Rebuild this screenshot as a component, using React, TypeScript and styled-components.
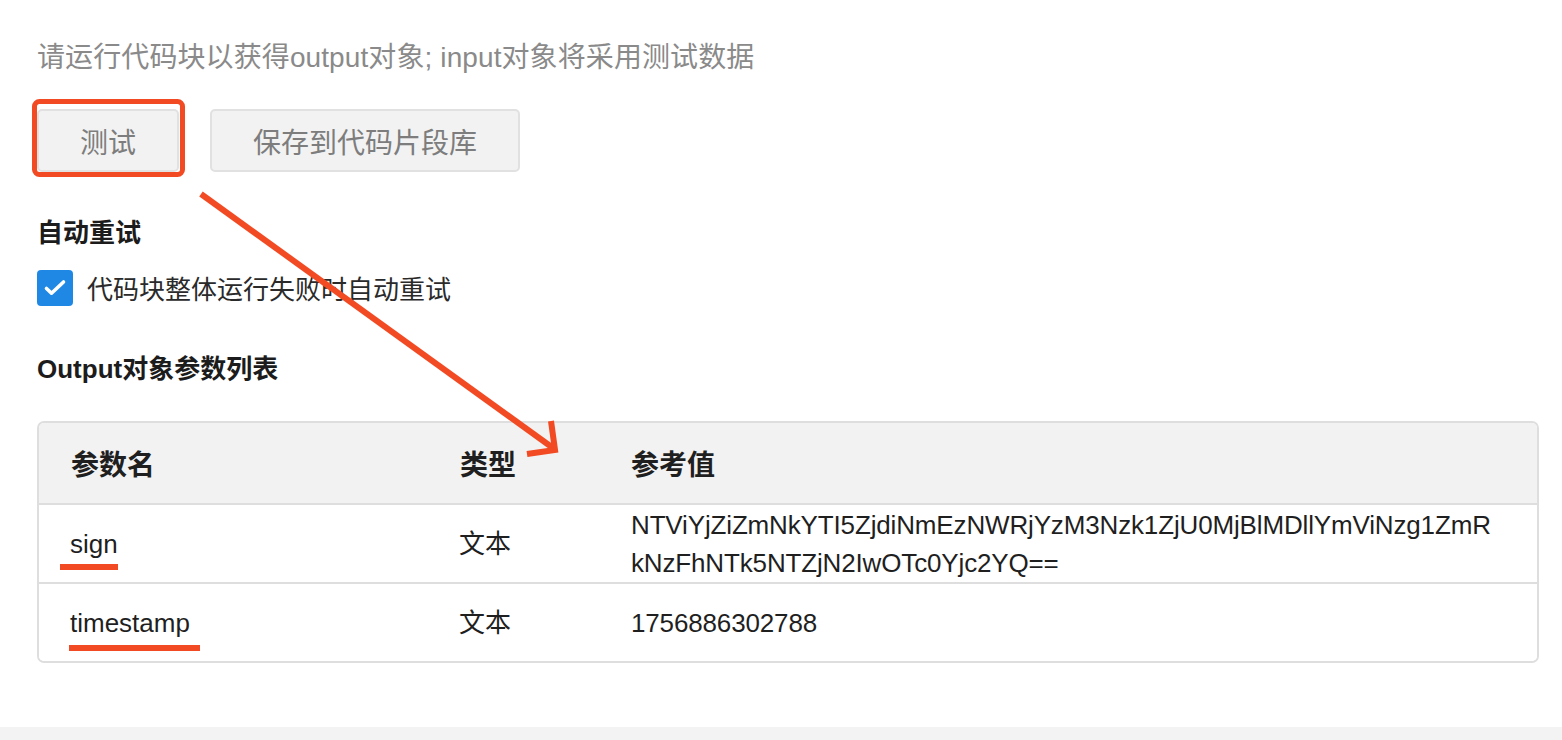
import React from "react";
import styled, { createGlobalStyle } from "styled-components";

const GlobalStyle = createGlobalStyle`
  html, body { margin: 0; padding: 0; background: #ffffff; }
  body {
    font-family: "Liberation Sans", "Noto Sans CJK SC", sans-serif;
    -webkit-font-smoothing: antialiased;
  }
  * { box-sizing: border-box; }
`;

const Page = styled.div`
  position: relative;
  width: 1562px;
  height: 740px;
  overflow: hidden;
  display: flex;
  flex-direction: column;
`;

const Main = styled.main`
  height: 727px;
  padding: 38px 23px 0 37px;
  display: flex;
  flex-direction: column;
`;

const Footer = styled.footer`
  flex: 1;
  background: #f3f3f3;
`;

const Hint = styled.p`
  margin: 0;
  font-size: 28px;
  line-height: 40px;
  letter-spacing: 0.1px;
  color: #8a8a8a;
`;

const ButtonRow = styled.div`
  margin-top: 31px;
  display: flex;
  gap: 31px;
`;

const Button = styled.button`
  height: 63px;
  padding: 0 41px;
  border: 2px solid #e1e1e1;
  border-radius: 5px;
  background: #f2f2f2;
  color: #7d7d7d;
  font-family: "Noto Sans CJK SC", sans-serif;
  font-size: 28px;
  cursor: pointer;
`;

const SectionTitle = styled.h3<{ $gap: number }>`
  margin: ${(p) => p.$gap}px 0 0;
  font-size: 26px;
  line-height: 36px;
  font-weight: 700;
  color: #1c1c1c;
`;

const CheckRow = styled.div`
  margin-top: 19px;
  display: flex;
  align-items: center;
  gap: 14px;
  height: 36px;
`;

const CheckLabel = styled.span`
  font-family: "Noto Sans CJK SC", sans-serif;
  font-size: 26px;
  line-height: 36px;
  color: #2a2a2a;
`;

const CheckBox = styled.span`
  width: 36px;
  height: 36px;
  border-radius: 4px;
  background: #1f88e5;
  display: flex;
  align-items: center;
  justify-content: center;
  flex: none;
`;

const Table = styled.div`
  margin-top: 34px;
  border: 2px solid #dedede;
  border-radius: 7px;
  overflow: hidden;
`;

const Row = styled.div<{ $head?: boolean }>`
  display: grid;
  grid-template-columns: 389px 171px 1fr;
  align-items: center;
  min-height: ${(p) => (p.$head ? 80 : 79)}px;
  background: ${(p) => (p.$head ? "#f2f2f2" : "#ffffff")};
  & + & { border-top: 2px solid #dedede; }
`;

const HeadCell = styled.div`
  padding-left: 32px;
  font-family: "Noto Sans CJK SC", sans-serif;
  font-size: 28px;
  font-weight: 700;
  color: #1f1f1f;
`;

const Cell = styled.div<{ $value?: boolean }>`
  padding-left: ${(p) => (p.$value ? 32 : 31)}px;
  padding-right: 42px;
  font-size: 26px;
  line-height: 38px;
  letter-spacing: ${(p) => (p.$value ? "-0.15px" : "0")};
  color: #1f1f1f;
  word-break: break-all;
`;

const Overlay = styled.svg`
  position: absolute;
  left: 0;
  top: 0;
  pointer-events: none;
`;

const RED = "#f24a23";

const rows = [
  {
    name: "sign",
    type: "文本",
    value:
      "NTViYjZiZmNkYTI5ZjdiNmEzNWRjYzM3Nzk1ZjU0MjBlMDllYmViNzg1ZmRkNzFhNTk5NTZjN2IwOTc0Yjc2YQ==",
  },
  { name: "timestamp", type: "文本", value: "1756886302788" },
];

export default function App() {
  return (
    <Page>
      <GlobalStyle />
      <Main>
        <Hint>请运行代码块以获得output对象; input对象将采用测试数据</Hint>
        <ButtonRow>
          <Button>测试</Button>
          <Button>保存到代码片段库</Button>
        </ButtonRow>
        <SectionTitle $gap={43}>自动重试</SectionTitle>
        <CheckRow>
          <CheckBox>
            <svg width="36" height="36" viewBox="0 0 36 36">
              <path
                d="M9.5 18.5 L14.5 23.2 L26.5 12"
                fill="none"
                stroke="#fff"
                strokeWidth="3.6"
                strokeLinecap="round"
                strokeLinejoin="round"
              />
            </svg>
          </CheckBox>
          <CheckLabel>代码块整体运行失败时自动重试</CheckLabel>
        </CheckRow>
        <SectionTitle $gap={45}>Output对象参数列表</SectionTitle>
        <Table>
          <Row $head>
            <HeadCell>参数名</HeadCell>
            <HeadCell>类型</HeadCell>
            <HeadCell>参考值</HeadCell>
          </Row>
          {rows.map((r) => (
            <Row key={r.name}>
              <Cell>{r.name}</Cell>
              <Cell>{r.type}</Cell>
              <Cell $value>{r.value}</Cell>
            </Row>
          ))}
        </Table>
      </Main>
      <Footer />
      <Overlay width="1562" height="740" viewBox="0 0 1562 740">
        <rect x="34.5" y="101.5" width="148" height="73" rx="5" fill="none" stroke={RED} strokeWidth="5" />
        <line x1="201" y1="194" x2="553" y2="448" stroke={RED} strokeWidth="6" />
        <polyline points="551,421 555,450 527,454" fill="none" stroke={RED} strokeWidth="6" strokeLinejoin="miter" />
        <rect x="60" y="564" width="58" height="6" fill={RED} />
        <rect x="69" y="645" width="131" height="6" fill={RED} />
      </Overlay>
    </Page>
  );
}
